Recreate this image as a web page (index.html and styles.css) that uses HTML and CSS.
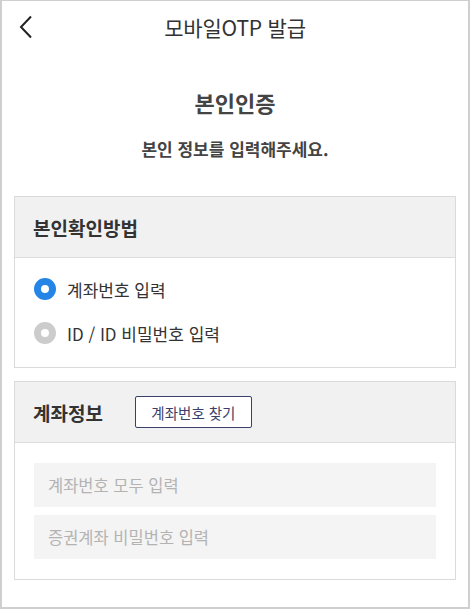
FILE: index.html
```html
<!DOCTYPE html>
<html lang="ko">
<head>
    <meta charset="UTF-8" />
    <meta name="viewport" content="width=device-width, initial-scale=1.0" />
    <title>모바일OTP 발급</title>
    <link rel="stylesheet" href="styles.css">
</head>
<body>
    <div class="screen">
        <div class="topBar">
            <button class="backBtn" aria-label="뒤로">
                <svg width="14" height="24" viewBox="0 0 14 24">
                    <path d="M12 1.5 L2 12 L12 22.5" fill="none" stroke="#222" stroke-width="2" />
                </svg>
            </button>
            <h1 class="topTitle">모바일OTP 발급</h1>
        </div>

        <div class="intro">
            <h2 class="introTitle">본인인증</h2>
            <p class="introText">본인 정보를 입력해주세요.</p>
        </div>

        <div class="card">
            <div class="cardHead">
                <h3>본인확인방법</h3>
            </div>
            <div class="cardBody radios">
                <label class="radio">
                    <span class="dot on"></span>
                    <span>계좌번호 입력</span>
                </label>
                <label class="radio">
                    <span class="dot"></span>
                    <span>ID / ID 비밀번호 입력</span>
                </label>
            </div>
        </div>

        <div class="card">
            <div class="cardHead">
                <h3>계좌정보</h3>
                <button class="findBtn">계좌번호 찾기</button>
            </div>
            <div class="cardBody fields">
                <input class="field" type="text" placeholder="계좌번호 모두 입력" />
                <input class="field" type="password" placeholder="증권계좌 비밀번호 입력" />
            </div>
        </div>
    </div>
</body>
</html>
```

FILE: styles.css
```css
body {
    margin: 0;
    background-color: #fff;
    font-family: "Noto Sans CJK KR", "Noto Sans", sans-serif;
    color: #333;
}
.screen {
    box-sizing: border-box;
    height: 609px;
    border: 2px solid #cfcfcf;
    border-top-width: 1px;
    padding: 0 12px;
}
.topBar {
    position: relative;
    height: 52px;
    display: flex;
    align-items: center;
    justify-content: center;
}
.backBtn {
    position: absolute;
    left: 5px;
    top: 14px;
    padding: 0;
    border: 0;
    background: none;
}
.topTitle {
    margin: 0;
    font-size: 21px;
    font-weight: 400;
    color: #333;
    letter-spacing: -0.2px;
}
.intro {
    text-align: center;
    padding-top: 34px;
    padding-bottom: 35px;
}
.introTitle {
    margin: 0;
    font-size: 22px;
    font-weight: 700;
    line-height: 30px;
    color: #444;
}
.introText {
    margin: 20px 0 0;
    font-size: 17px;
    font-weight: 700;
    line-height: 24px;
    color: #444;
}
.card {
    border: 1px solid #dadada;
    margin-bottom: 13px;
}
.cardHead {
    display: flex;
    align-items: center;
    gap: 32px;
    height: 60px;
    padding: 0 18px;
    background-color: #f1f1f1;
    border-bottom: 1px solid #dcdcdc;
}
.cardHead h3 {
    margin: 0;
    font-size: 19px;
    font-weight: 700;
    color: #333;
}
.findBtn {
    height: 32px;
    width: 117px;
    border: 1.5px solid #3b3f6b;
    border-radius: 2px;
    background-color: #fff;
    color: #3b3f6b;
    font-family: inherit;
    font-size: 14.5px;
}
.radios {
    padding: 9px 20px 12px 19px;
}
.radio {
    display: flex;
    align-items: center;
    gap: 11px;
    height: 44px;
    font-size: 17px;
    color: #333;
}
.dot {
    box-sizing: border-box;
    width: 22px;
    height: 22px;
    border-radius: 50%;
    border: 7px solid #cccccc;
    background-color: #fff;
}
.dot.on {
    border-color: #2485e6;
}
.fields {
    display: flex;
    flex-direction: column;
    gap: 8px;
    padding: 20px 19px 20px;
}
.field {
    box-sizing: border-box;
    height: 44px;
    border: 0;
    background-color: #f4f4f4;
    padding: 0 14px;
    font-family: inherit;
    font-size: 16.5px;
}
.field::placeholder {
    color: #b3b3b3;
}
```
